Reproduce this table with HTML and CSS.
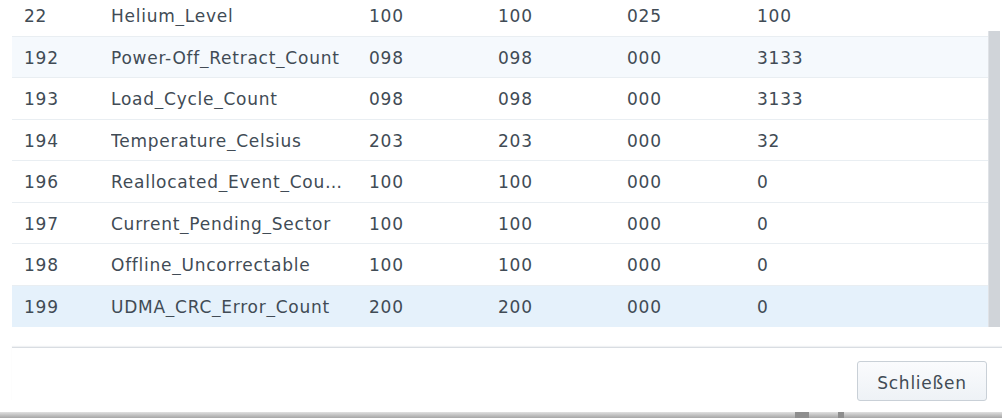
FILE: index.html
```html
<!DOCTYPE html>
<html>
<head>
<meta charset="utf-8">
<link rel="stylesheet" href="styles.css">
</head>
<body>
<div class="dialog">
  <div class="grid">
    <div class="viewport">
      <div class="rows">
        <div class="row"><span class="c-id">22</span><span class="c-name">Helium_Level</span><span class="c-v">100</span><span class="c-v">100</span><span class="c-v">025</span><span class="c-raw">100</span></div>
        <div class="row hover"><span class="c-id">192</span><span class="c-name">Power-Off_Retract_Count</span><span class="c-v">098</span><span class="c-v">098</span><span class="c-v">000</span><span class="c-raw">3133</span></div>
        <div class="row"><span class="c-id">193</span><span class="c-name">Load_Cycle_Count</span><span class="c-v">098</span><span class="c-v">098</span><span class="c-v">000</span><span class="c-raw">3133</span></div>
        <div class="row"><span class="c-id">194</span><span class="c-name">Temperature_Celsius</span><span class="c-v">203</span><span class="c-v">203</span><span class="c-v">000</span><span class="c-raw">32</span></div>
        <div class="row"><span class="c-id">196</span><span class="c-name">Reallocated_Event_Count</span><span class="c-v">100</span><span class="c-v">100</span><span class="c-v">000</span><span class="c-raw">0</span></div>
        <div class="row"><span class="c-id">197</span><span class="c-name">Current_Pending_Sector</span><span class="c-v">100</span><span class="c-v">100</span><span class="c-v">000</span><span class="c-raw">0</span></div>
        <div class="row"><span class="c-id">198</span><span class="c-name">Offline_Uncorrectable</span><span class="c-v">100</span><span class="c-v">100</span><span class="c-v">000</span><span class="c-raw">0</span></div>
        <div class="row selected"><span class="c-id">199</span><span class="c-name">UDMA_CRC_Error_Count</span><span class="c-v">200</span><span class="c-v">200</span><span class="c-v">000</span><span class="c-raw">0</span></div>
      </div>
    </div>
    <div class="scrollbar"></div>
  </div>
  <div class="footer">
    <button class="btn">Schließen</button>
  </div>
</div>
<div class="backdrop"><span class="blk b1"></span><span class="blk b2"></span></div>
</body>
</html>
```

FILE: styles.css
```css
* { box-sizing: border-box; }
html, body { margin: 0; padding: 0; background: #ffffff; }
body {
  width: 1002px;
  height: 418px;
  overflow: hidden;
  font-family: "DejaVu Sans", Verdana, sans-serif;
  font-size: 17px;
  letter-spacing: 0.75px;
  color: #414b55;
}
.dialog {
  height: 412px;
  display: flex;
  flex-direction: column;
}
.grid {
  height: 327px;
  display: flex;
  padding-left: 12px;
  padding-right: 2px;
}
.viewport {
  flex: 1;
  overflow: hidden;
}
.rows {
  margin-top: -5px;
}
.row {
  display: flex;
  align-items: center;
  height: 41.5px;
  padding-top: 2px;
  border-bottom: 1px solid #e9eef2;
  white-space: nowrap;
}
.row.hover { background: #f5f9fd; }
.row.selected { background: #e5f1fb; border-bottom-color: #e5f1fb; }
.c-id { width: 99px; padding-left: 12px; }
.c-name {
  width: 258px;
  padding-right: 27px;
  overflow: hidden;
  text-overflow: ellipsis;
}
.c-v { width: 129px; }
.c-raw { flex: 1; padding-left: 1px; }
.scrollbar {
  width: 12px;
  margin-top: 31px;
  height: 296px;
  background: #d0d4d9;
  border-left: 1px solid #dfe2e6;
}
.footer {
  margin-top: 20px;
  margin-left: 12px;
  border-top: 1px solid #d9dde2;
  box-shadow: 0 -1px 1px #f0f2f4;
  display: flex;
  justify-content: flex-end;
  padding: 13px 15px 0 0;
}
.btn {
  width: 130px;
  height: 40px;
  border: 1px solid #c9d0d7;
  border-radius: 3px;
  background: linear-gradient(#fafbfd, #eef2f6);
  font-family: "DejaVu Sans", Verdana, sans-serif;
  font-size: 17px;
  letter-spacing: 0.75px;
  color: #414b55;
  padding: 3px 0 0 0;
}
.backdrop {
  height: 6px;
  background: linear-gradient(#e0e0e0, #a6a6a6);
  display: flex;
}
.blk { display: block; height: 6px; background: #8e8e8e; }
.b1 { margin-left: 795px; width: 14px; }
.b2 { margin-left: 29px; width: 6px; }
```
